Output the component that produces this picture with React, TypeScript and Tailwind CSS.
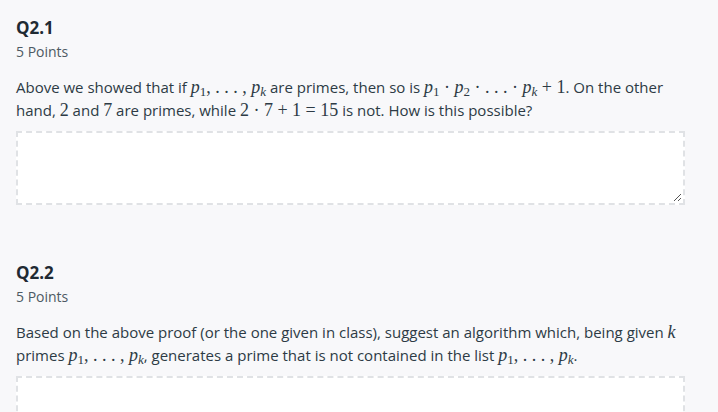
import React from 'react';

const M = ({ children }: { children: React.ReactNode }) => (
  <span className="font-['Liberation_Serif',serif] text-[18px] leading-[23px]">{children}</span>
);
const V = ({ children }: { children: React.ReactNode }) => <i className="font-['Liberation_Serif',serif]">{children}</i>;
const Sub = ({ children }: { children: React.ReactNode }) => (
  <span className="relative top-[3px] text-[13px] leading-[13px] not-italic">{children}</span>
);

const P = ({ s }: { s: string }) => (
  <M>
    <V>p</V>
    <Sub>{s === 'k' ? <i>k</i> : s}</Sub>
  </M>
);

const Question = ({ title, children, last }: { title: string; children: React.ReactNode; last?: boolean }) => (
  <div className="flex flex-col">
    <h2 className="text-[17px] font-bold leading-[20px] text-[#1f2a33]">{title}</h2>
    <div className="mt-[4px] text-[14px] leading-[20px] text-[#4d5a63]">5 Points</div>
    <div className="mt-[14px] text-[15px] leading-[23px] text-[#2d3b45]">{children}</div>
    <div className="mt-[9px] h-[74px] w-[669px] relative border-2 border-dashed border-[#e0e2e5] bg-white">
      {!last && (
        <svg className="absolute right-[1px] bottom-[1px]" width="9" height="9" viewBox="0 0 9 9">
          <path d="M8 1 L1 8 M8 5 L5 8" stroke="#555" strokeWidth="1" />
        </svg>
      )}
    </div>
  </div>
);

export default function App() {
  return (
    <div className="h-[412px] w-[718px] overflow-hidden bg-[#f8f8fa] px-[16px] pt-[18px] font-['Open_Sans',sans-serif]">
      <Question title="Q2.1">
        Above we showed that if <P s="1" /><M>, . . . , </M><P s="k" /> are primes, then so is <P s="1" /><M> · </M>
        <P s="2" />
        <M> · . . . · </M>
        <P s="k" />
        <M> + 1</M>. On the other hand, <M>2</M> and <M>7</M> are primes, while <M>2 · 7 + 1 = 15</M> is not. How is this
        possible?
      </Question>
      <div className="h-[58px]" />
      <Question title="Q2.2" last>
        Based on the above proof (or the one given in class), suggest an algorithm which, being given{' '}
        <M>
          <V>k</V>
        </M>{' '}
        primes <P s="1" />
        <M>, . . . , </M>
        <P s="k" />, generates a prime that is not contained in the list <P s="1" />
        <M>, . . . , </M>
        <P s="k" />.
      </Question>
    </div>
  );
}
